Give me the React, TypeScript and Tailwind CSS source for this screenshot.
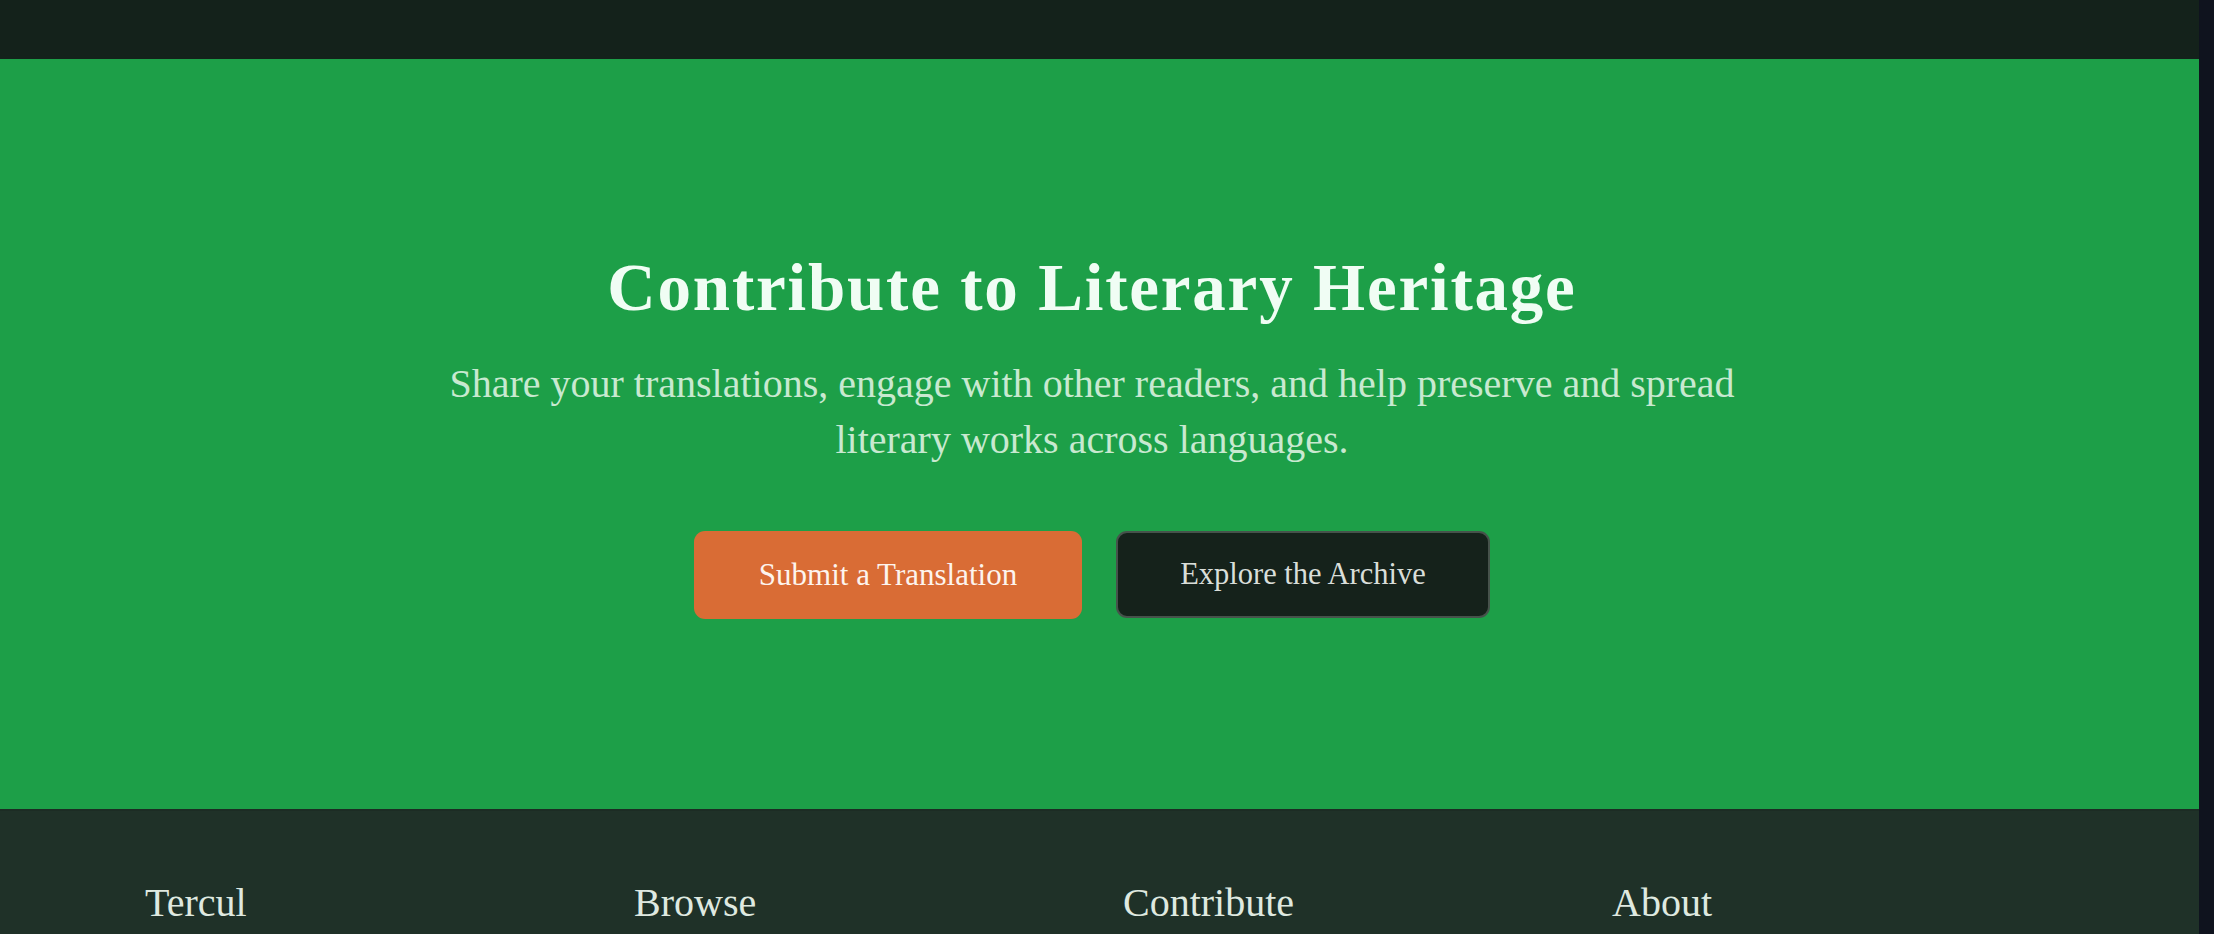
import React from 'react';

const serif = "font-['Liberation_Serif','Times_New_Roman',serif]";

const footerColumns = ['Tercul', 'Browse', 'Contribute', 'About'];

const CallToAction: React.FC = () => {
  return (
    <section className="bg-[#1d9f48] pt-[188px] pb-[190px]">
      <div className="flex flex-col items-center pr-[15px] text-center">
        <h2 className={`${serif} text-[67px] leading-[80px] font-bold tracking-[1.8px] text-[#f0fdf4]`}>
          Contribute to Literary Heritage
        </h2>
        <p className={`${serif} mt-[29px] w-[1300px] text-[40px] leading-[56px] text-[#c8e9d0]`}>
          Share your translations, engage with other readers, and help preserve and spread literary works across languages.
        </p>
        <div className="mt-[63px] flex gap-[34px]">
          <button className={`${serif} flex h-[88px] w-[388px] items-center justify-center rounded-[11px] bg-[#d96c35] text-[31px] text-[#fdf4ee]`}>
            Submit a Translation
          </button>
          <button className={`${serif} flex h-[87px] w-[374px] items-center justify-center rounded-[11px] border-2 border-[#46524b] bg-[#15221b] text-[30.5px] text-[#d9ded9]`}>
            Explore the Archive
          </button>
        </div>
      </div>
    </section>
  );
};

const Footer: React.FC = () => {
  return (
    <footer className="border-t-2 border-[#1c2c24] bg-[#1f3128] px-[145px] pt-[68px] pb-16">
      <div className="grid grid-cols-4 gap-x-[47px]">
        {footerColumns.map((title) => (
          <h3 key={title} className={`${serif} text-[40px] leading-[48px] text-[#dfe9e0]`}>
            {title}
          </h3>
        ))}
      </div>
    </footer>
  );
};

export default function App() {
  return (
    <div className="flex h-[934px] overflow-hidden bg-[#0f131e]">
      <div className="flex-1">
        <div className="h-[59px] bg-[#14221b]" />
        <CallToAction />
        <Footer />
      </div>
      <div className="w-[15px] shrink-0 bg-[#0f131e]" />
    </div>
  );
}
